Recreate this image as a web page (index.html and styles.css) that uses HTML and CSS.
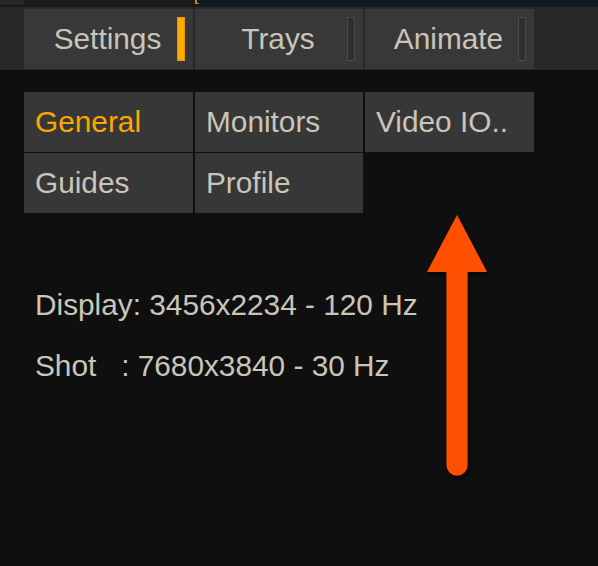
FILE: index.html
```html
<!DOCTYPE html>
<html>
<head>
<meta charset="utf-8">
<link rel="stylesheet" href="styles.css">
</head>
<body>
<div class="app">
  <div class="topstrip">
    <div class="ts-left"></div>
    <div class="ts-mid"></div>
    <div class="ts-right"><span class="corner"></span></div>
  </div>
  <div class="sep"></div>
  <div class="tabbar">
    <div class="tab"><span>Settings</span><i class="ind on"></i></div>
    <div class="tab"><span>Trays</span><i class="ind"></i></div>
    <div class="tab"><span>Animate</span><i class="ind"></i></div>
  </div>
  <div class="main">
    <div class="grid">
      <div class="cell active">General</div>
      <div class="cell">Monitors</div>
      <div class="cell">Video IO..</div>
      <div class="cell">Guides</div>
      <div class="cell">Profile</div>
    </div>
    <div class="info">
      <div class="line">Display: 3456x2234 - 120 Hz</div>
      <div class="line">Shot   : 7680x3840 - 30 Hz</div>
    </div>
  </div>
  <svg class="arrow" width="80" height="280" viewBox="0 0 80 280">
    <defs>
      <filter id="sh" x="-50%" y="-20%" width="200%" height="140%">
        <feDropShadow dx="1" dy="2" stdDeviation="2" flood-color="#000" flood-opacity="0.8"/>
      </filter>
    </defs>
    <g filter="url(#sh)" fill="#ff5000">
      <polygon points="46,5 76,62 16,62"/>
      <path d="M35.5 60 H56.5 V255 A10.5 10.5 0 0 1 35.5 255 Z"/>
    </g>
  </svg>
</div>
</body>
</html>
```

FILE: styles.css
```css
html, body {
  margin: 0;
  padding: 0;
  background: #0f0f0f;
}
.app {
  position: relative;
  width: 598px;
  height: 566px;
  overflow: hidden;
  background: #0f0f0f;
  font-family: "Liberation Sans", Arial, sans-serif;
  font-size: 29.8px;
  color: #c9c5b9;
}
.topstrip {
  display: flex;
  height: 5px;
}
.ts-left { width: 24px; background: #262626; }
.ts-mid { width: 171px; background: #1c1c1c; }
.ts-right {
  flex: 1;
  background: #111923;
  position: relative;
}
.corner {
  position: absolute;
  left: 0;
  top: 0;
  width: 4px;
  height: 4px;
  border-left: 2px solid #c98a00;
  border-bottom: 1px solid #c98a00;
  box-sizing: border-box;
}
.sep {
  height: 2px;
  background: #1c1c1c;
  border-top: 1px solid #151515;
  box-sizing: border-box;
}
.tabbar {
  display: grid;
  grid-template-columns: 169px 168px 169px;
  column-gap: 2px;
  background: #282828;
  padding: 2px 0 1px 24px;
}
.tab {
  position: relative;
  height: 60px;
  line-height: 60px;
  text-align: center;
  background: #383838;
}
.tab span {
  display: inline-block;
  padding-right: 2px;
}
.ind {
  position: absolute;
  right: 8px;
  top: 8px;
  width: 8px;
  height: 44px;
  box-sizing: border-box;
  border: 1px solid #4a4a4a;
  background: #2f2f2f;
}
.ind.on {
  background: #ffab00;
  border-color: #e69a00;
}
.main {
  padding: 22px 0 0 24px;
}
.grid {
  display: grid;
  grid-template-columns: 169px 168px 169px;
  grid-auto-rows: 60px;
  column-gap: 2px;
  row-gap: 1px;
}
.cell {
  background: #373737;
  line-height: 60px;
  padding-left: 11px;
  white-space: nowrap;
}
.cell.active {
  color: #fba700;
}
.info {
  margin-top: 61px;
  padding-left: 11px;
}
.line {
  line-height: 61px;
  white-space: pre;
}
.arrow {
  position: absolute;
  left: 411px;
  top: 210px;
}
```
